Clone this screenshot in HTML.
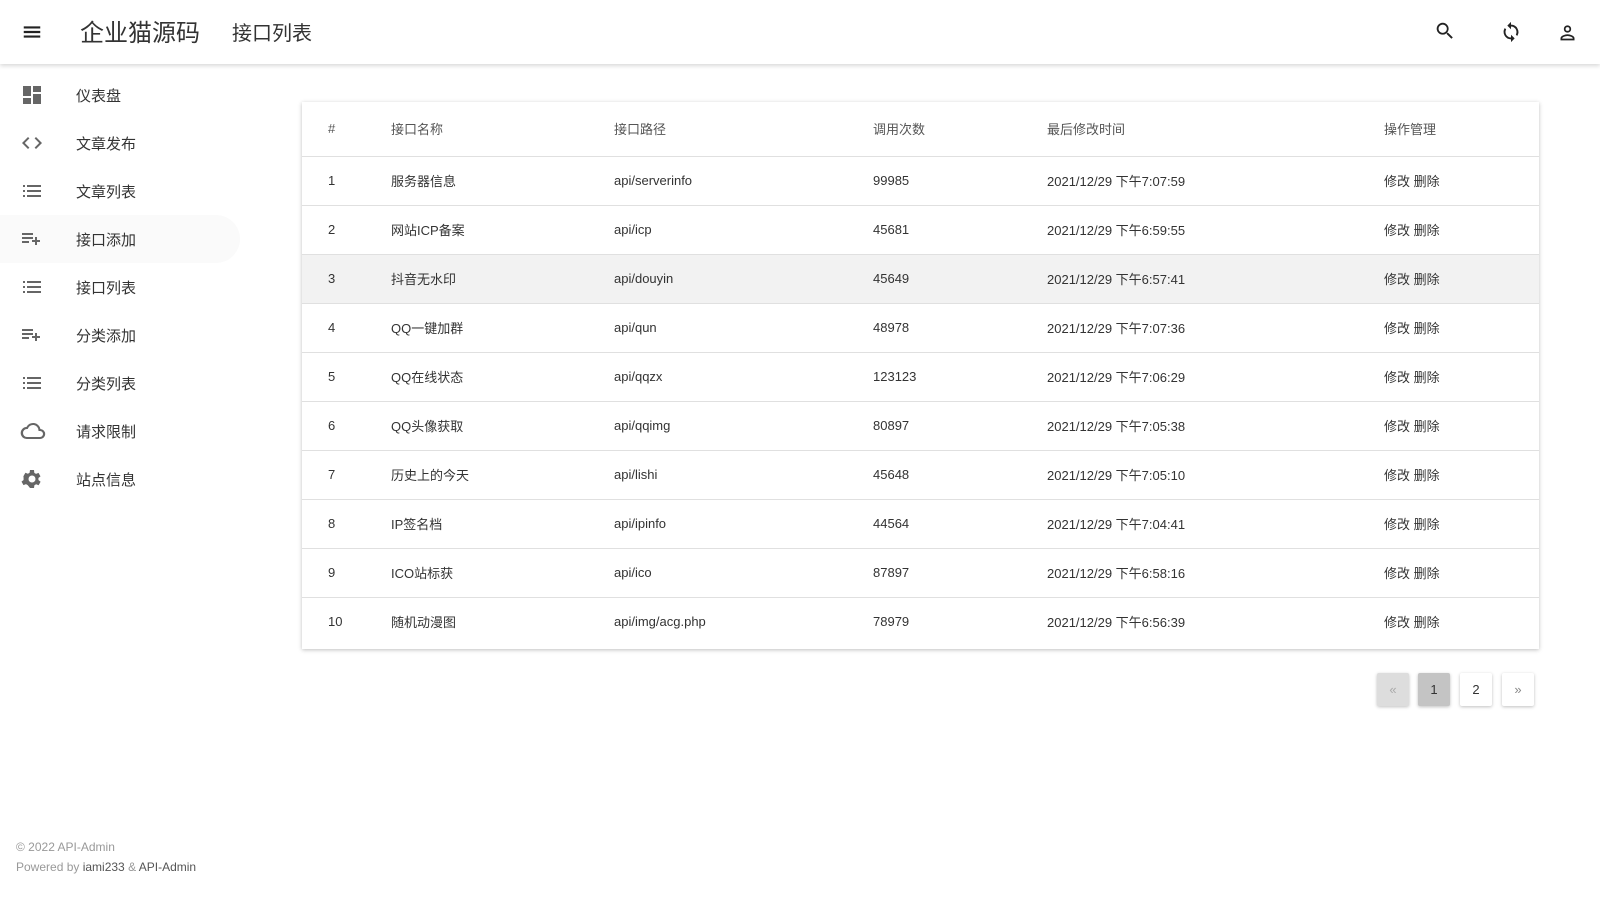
<!DOCTYPE html>
<html><head><meta charset="utf-8"><style>
*{box-sizing:border-box;margin:0;padding:0}
body{width:1600px;height:900px;background:#fff;font-family:"Liberation Sans","Noto Sans CJK SC",sans-serif;color:#333;position:relative;overflow:hidden}
.top{position:absolute;left:0;top:0;width:1600px;height:64px;background:#fff;box-shadow:0 2px 4px rgba(0,0,0,.15);z-index:2}
.top .t1{position:absolute;left:80px;top:13px;font-size:24px;color:#333}
.top .t2{position:absolute;left:232px;top:17px;font-size:20px;color:#333}
.ic{position:absolute}
.side{position:absolute;left:0;top:71px;width:240px}
.it{position:relative;height:48px;display:flex;align-items:center;font-size:15px;color:#333}
.it svg{position:absolute;left:20px;top:12px}
.it span{position:absolute;left:76px}
.it.act{background:#fafafa;border-radius:0 24px 24px 0}
.card{position:absolute;left:302px;top:102px;width:1237px;height:547px;background:#fff;box-shadow:0 1px 4px rgba(0,0,0,.25)}
table{width:100%;border-collapse:collapse;font-size:13px;color:#333}
th{height:54px;font-weight:normal;color:#555;text-align:left;border-bottom:1px solid #e0e0e0}
td{height:49px;border-bottom:1px solid #e0e0e0}
tr:last-child td{border-bottom:none}
tr.hl td{background:#f2f2f2}
.c0{padding-left:26px;width:89px}.c1{width:223px}.c2{width:259px}.c3{width:174px}.c4{width:337px}
.pg{position:absolute;top:673px;height:33px;width:32px;font-size:13px;text-align:center;line-height:33px;box-shadow:0 1px 3px rgba(0,0,0,.25);border-radius:2px;background:#fff}
.foot{position:absolute;left:16px;font-size:12px;color:#999}
</style></head><body>
<div class="top">
<svg class="ic" style="left:21px;top:21px" width="22" height="22" viewBox="0 0 24 24"><path d="M3 5.8h18v2.4H3zm0 5h18v2.4H3zm0 5h18v2.4H3z" fill="#222"/></svg>
<div class="t1">企业猫源码</div><div class="t2">接口列表</div>
<svg class="ic" style="left:1434px;top:20px" width="22" height="22" viewBox="0 0 24 24"><path d="M15.5 14h-.8l-.3-.3A6.5 6.5 0 1 0 9.5 16a6.5 6.5 0 0 0 4.2-1.6l.3.3v.8l5 5 1.5-1.5-5-5zm-6 0C7 14 5 12 5 9.5S7 5 9.5 5 14 7 14 9.5 12 14 9.5 14z" fill="#222"/></svg>
<svg class="ic" style="left:1500px;top:21px" width="22" height="22" viewBox="0 0 24 24"><path d="M12 4V1L8 5l4 4V6c3.3 0 6 2.7 6 6 0 1-.3 2-.7 2.8l1.5 1.5A8 8 0 0 0 12 4zm0 14c-3.3 0-6-2.7-6-6 0-1 .3-2 .7-2.8L5.2 7.7A8 8 0 0 0 12 20v3l4-4-4-4v3z" fill="#222"/></svg>
<svg class="ic" style="left:1557px;top:22px" width="21" height="21" viewBox="0 0 24 24"><circle cx="12" cy="8" r="3.2" fill="none" stroke="#222" stroke-width="2"/><path d="M5 20v-1.5c0-2 4.5-3.5 7-3.5s7 1.5 7 3.5V20z" fill="none" stroke="#222" stroke-width="2"/></svg>
</div>
<div class="side">
<div class="it"><svg width="24" height="24" viewBox="0 0 24 24"><path d="M3 13h8V3H3zm0 8h8v-6H3zm10 0h8V11h-8zm0-18v6h8V3z" fill="#666"/></svg><span>仪表盘</span></div>
<div class="it"><svg width="24" height="24" viewBox="0 0 24 24"><path d="M9.4 16.6 4.8 12l4.6-4.6L8 6l-6 6 6 6zm5.2 0 4.6-4.6-4.6-4.6L16 6l6 6-6 6z" fill="#666"/></svg><span>文章发布</span></div>
<div class="it"><svg width="24" height="24" viewBox="0 0 24 24"><path d="M3 6h2v2H3zm4 0h14v2H7zM3 11h2v2H3zm4 0h14v2H7zM3 16h2v2H3zm4 0h14v2H7z" fill="#666"/></svg><span>文章列表</span></div>
<div class="it act"><svg width="24" height="24" viewBox="0 0 24 24"><path d="M2 6h11v2H2zm0 4h11v2H2zm0 4h7v2H2zm15-1v-3h-2v3h-3v2h3v3h2v-3h3v-2z" fill="#666"/></svg><span>接口添加</span></div>
<div class="it"><svg width="24" height="24" viewBox="0 0 24 24"><path d="M3 6h2v2H3zm4 0h14v2H7zM3 11h2v2H3zm4 0h14v2H7zM3 16h2v2H3zm4 0h14v2H7z" fill="#666"/></svg><span>接口列表</span></div>
<div class="it"><svg width="24" height="24" viewBox="0 0 24 24"><path d="M2 6h11v2H2zm0 4h11v2H2zm0 4h7v2H2zm15-1v-3h-2v3h-3v2h3v3h2v-3h3v-2z" fill="#666"/></svg><span>分类添加</span></div>
<div class="it"><svg width="24" height="24" viewBox="0 0 24 24"><path d="M3 6h2v2H3zm4 0h14v2H7zM3 11h2v2H3zm4 0h14v2H7zM3 16h2v2H3zm4 0h14v2H7z" fill="#666"/></svg><span>分类列表</span></div>
<div class="it"><svg width="26" height="24" viewBox="0 0 24 24"><path d="M19.4 10A7.5 7.5 0 0 0 5.4 8 6 6 0 0 0 6 20h13a5 5 0 0 0 .4-10zM19 18H6a4 4 0 0 1 0-8h.7A5.5 5.5 0 0 1 17.5 11.5V12H19a3 3 0 0 1 0 6z" fill="#666"/></svg><span>请求限制</span></div>
<div class="it"><svg width="24" height="24" viewBox="0 0 24 24"><path d="M19.4 13a7 7 0 0 0 0-2l2.1-1.6-2-3.5-2.5 1a7 7 0 0 0-1.7-1L15 3h-4l-.4 2.7a7 7 0 0 0-1.7 1l-2.5-1-2 3.5L4.6 11a7 7 0 0 0 0 2l-2.1 1.6 2 3.5 2.5-1a7 7 0 0 0 1.7 1L11 21h4l.4-2.7a7 7 0 0 0 1.7-1l2.5 1 2-3.5zM13 15.5a3.5 3.5 0 1 1 0-7 3.5 3.5 0 0 1 0 7z" fill="#666" transform="translate(-1 0)"/></svg><span>站点信息</span></div>
</div>
<div class="card"><table>
<tr><th class="c0">#</th><th class="c1">接口名称</th><th class="c2">接口路径</th><th class="c3">调用次数</th><th class="c4">最后修改时间</th><th>操作管理</th></tr>
<tr><td class="c0">1</td><td>服务器信息</td><td>api/serverinfo</td><td>99985</td><td>2021/12/29 下午7:07:59</td><td>修改 删除</td></tr>
<tr><td class="c0">2</td><td>网站ICP备案</td><td>api/icp</td><td>45681</td><td>2021/12/29 下午6:59:55</td><td>修改 删除</td></tr>
<tr class="hl"><td class="c0">3</td><td>抖音无水印</td><td>api/douyin</td><td>45649</td><td>2021/12/29 下午6:57:41</td><td>修改 删除</td></tr>
<tr><td class="c0">4</td><td>QQ一键加群</td><td>api/qun</td><td>48978</td><td>2021/12/29 下午7:07:36</td><td>修改 删除</td></tr>
<tr><td class="c0">5</td><td>QQ在线状态</td><td>api/qqzx</td><td>123123</td><td>2021/12/29 下午7:06:29</td><td>修改 删除</td></tr>
<tr><td class="c0">6</td><td>QQ头像获取</td><td>api/qqimg</td><td>80897</td><td>2021/12/29 下午7:05:38</td><td>修改 删除</td></tr>
<tr><td class="c0">7</td><td>历史上的今天</td><td>api/lishi</td><td>45648</td><td>2021/12/29 下午7:05:10</td><td>修改 删除</td></tr>
<tr><td class="c0">8</td><td>IP签名档</td><td>api/ipinfo</td><td>44564</td><td>2021/12/29 下午7:04:41</td><td>修改 删除</td></tr>
<tr><td class="c0">9</td><td>ICO站标获</td><td>api/ico</td><td>87897</td><td>2021/12/29 下午6:58:16</td><td>修改 删除</td></tr>
<tr><td class="c0">10</td><td>随机动漫图</td><td>api/img/acg.php</td><td>78979</td><td>2021/12/29 下午6:56:39</td><td>修改 删除</td></tr>
</table></div>
<div class="pg" style="left:1377px;background:#ddd;color:#aaa">«</div>
<div class="pg" style="left:1418px;background:#c4c4c4;color:#333">1</div>
<div class="pg" style="left:1460px">2</div>
<div class="pg" style="left:1502px;color:#888">»</div>
<div class="foot" style="top:840px">© 2022 API-Admin</div>
<div class="foot" style="top:860px">Powered by <span style="color:#555">iami233</span> &amp; <span style="color:#555">API-Admin</span></div>
</body></html>
